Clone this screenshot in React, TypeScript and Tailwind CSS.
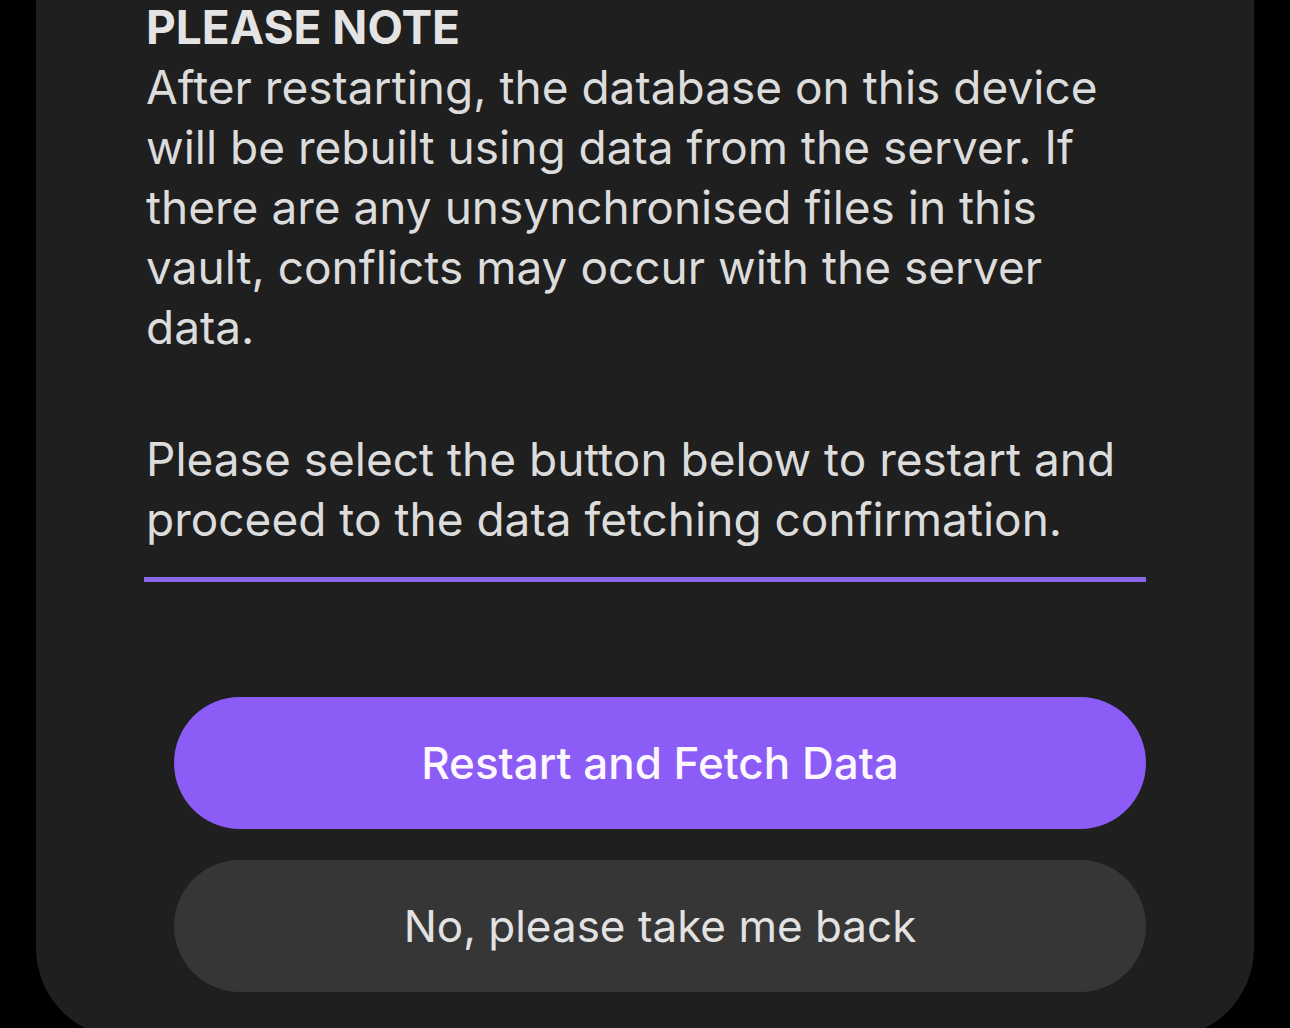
import React from 'react';

const font = { fontFamily: 'Inter, "Noto Sans", sans-serif' };

function PillButton({ label, primary }: { label: string; primary?: boolean }) {
  return (
    <button
      className={
        primary
          ? 'ml-[30px] h-[132px] rounded-full bg-[#8b5cf6] text-[44px] font-medium text-[#fdf7ff]'
          : 'ml-[30px] h-[132px] rounded-full bg-[#363636] text-[44px] text-[#e2e2e2]'
      }
    >
      {label}
    </button>
  );
}

export default function App() {
  return (
    <div className="h-[1028px] overflow-hidden bg-black px-[36px]" style={font}>
      <div className="flex flex-col rounded-b-[90px] bg-[#1f1f1f] px-[108px] pb-[46px]">
        <h2 className="-mt-[3px] pl-[2px] text-[46px] leading-[60px] font-bold text-[#e4e4e4]">
          PLEASE NOTE
        </h2>
        <p className="pl-[2px] text-[46px] leading-[60px] text-[#dcdcdc]">
          After restarting, the database on this device
          <br />
          will be rebuilt using data from the server. If
          <br />
          there are any unsynchronised files in this
          <br />
          vault, conflicts may occur with the server
          <br />
          data.
        </p>
        <p className="mt-[72px] pl-[2px] text-[46px] leading-[60px] text-[#dcdcdc]">
          Please select the button below to restart and
          <br />
          proceed to the data fetching confirmation.
        </p>
        <div className="mt-[28px] h-[5px] bg-[#8a66e8]" />
        <div className="mt-[115px] flex flex-col gap-[31px]">
          <PillButton label="Restart and Fetch Data" primary />
          <PillButton label="No, please take me back" />
        </div>
      </div>
    </div>
  );
}
